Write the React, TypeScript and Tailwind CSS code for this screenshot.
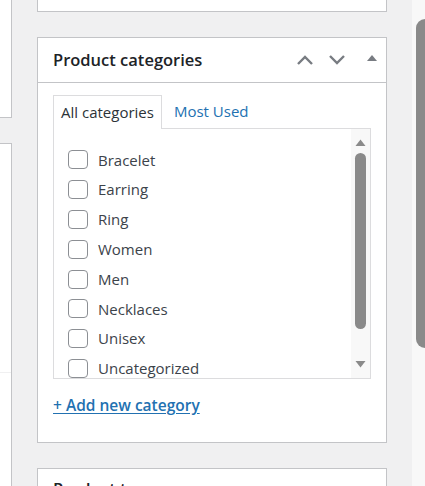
const CATEGORIES = ['Bracelet', 'Earring', 'Ring', 'Women', 'Men', 'Necklaces', 'Unisex', 'Uncategorized']

const font = { fontFamily: '"Open Sans", "Noto Sans", sans-serif' }

function Chevron({ up }: { up?: boolean }) {
  return (
    <svg className="w-[18px] h-[12px] text-[#787c82]" viewBox="0 0 18 12" fill="none" stroke="currentColor">
      {up ? (
        <path d="M2 10l7-7 7 7" strokeWidth={2.4} />
      ) : (
        <path d="M2 2l7 7 7-7" strokeWidth={2.4} />
      )}
    </svg>
  )
}

export default function App() {
  return (
    <div className="flex w-[425px] h-[486px] overflow-hidden bg-[#f0f0f1]" style={font}>
      {/* left column, mostly off-screen */}
      <div className="w-[12px] flex flex-col shrink-0">
        <div className="h-[118px] shrink-0 bg-white border-r border-b border-[#c3c4c7]" />
        <div className="mt-[25px] h-[65px] shrink-0 bg-white border-y border-r border-[#c3c4c7]" />
        <div className="flex-1 bg-white border-r border-[#c3c4c7] -mt-px">
          <div className="mt-[165px] border-t border-[#f0f0f1]" />
        </div>
      </div>

      {/* main sidebar column */}
      <div className="ml-[25px] w-[350px] shrink-0 flex flex-col">
        <div className="h-[12px] shrink-0 bg-white border-x border-b border-[#c3c4c7]" />

        <div className="mt-[25px] h-[406px] shrink-0 bg-white border border-[#c3c4c7] flex flex-col">
          <div className="h-[45px] border-b border-[#c3c4c7] flex items-center pl-[15px] pr-[8px]">
            <h2 className="flex-1 text-[16.5px] font-semibold text-[#1d2327]">Product categories</h2>
            <div className="flex items-center gap-[14px]">
              <Chevron up />
              <Chevron />
              <svg className="w-[12px] h-[10px] ml-[6px] mb-[5px] text-[#787c82]" viewBox="0 0 12 10" fill="currentColor">
                <path d="M1 8L6 2l5 6z" />
              </svg>
            </div>
          </div>

          <div className="px-[15px] pt-[11px]">
            <div className="flex items-end">
              <div className="h-[34px] px-[7px] flex items-center bg-white border-x border-t border-[#dcdcde] relative z-10 -mb-px text-[15px] text-[#2c3338]">
                All categories
              </div>
              <div className="h-[34px] pl-[12px] flex items-center text-[15px] text-[#2271b1]">Most Used</div>
            </div>

            <div className="h-[251px] border border-[#dcdcde] flex overflow-hidden">
              <ul className="flex-1 pt-[16px] pl-[14px]">
                {CATEGORIES.map((c) => (
                  <li key={c} className="h-[29.8px] flex items-center gap-[10px]">
                    <span className="w-[20px] h-[19px] rounded-[4px] border border-[#8c8f94] bg-white shrink-0" />
                    <span className="text-[15px] text-[#3c434a]">{c}</span>
                  </li>
                ))}
              </ul>
              <div className="w-[19px] bg-[#f8f8f8] flex flex-col items-center py-[10px]">
                <svg className="w-[11px] h-[7px] text-[#8a8a8a]" viewBox="0 0 11 7" fill="currentColor">
                  <path d="M0.5 7L5.5 0.5 10.5 7z" />
                </svg>
                <div className="mt-[7px] w-[11px] h-[176px] rounded-full bg-[#8a8a8a]" />
                <div className="flex-1" />
                <svg className="w-[11px] h-[7px] text-[#8a8a8a]" viewBox="0 0 11 7" fill="currentColor">
                  <path d="M0.5 0L5.5 6.5 10.5 0z" />
                </svg>
              </div>
            </div>

            <a className="inline-block mt-[15px] text-[15.5px] font-semibold text-[#2271b1] underline underline-offset-2">
              + Add new category
            </a>
          </div>
        </div>

        <div className="mt-[25px] flex-1 shrink-0 min-h-[40px] bg-white border-x border-t border-[#c3c4c7] pl-[15px] pt-[8px]">
          <h2 className="text-[16.5px] font-semibold text-[#1d2327]">Product tags</h2>
        </div>
      </div>

      {/* page scrollbar */}
      <div className="ml-[25px] flex-1 bg-[#f8f8f8] pt-[19px] pl-[4px]">
        <div className="h-[329px] bg-[#8a8a8a] rounded-l-full" />
      </div>
    </div>
  )
}
